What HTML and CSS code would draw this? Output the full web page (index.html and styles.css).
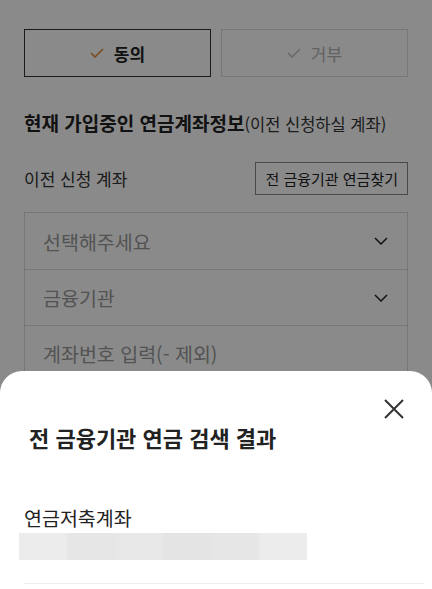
FILE: index.html
```html
<!DOCTYPE html>
<html lang="ko">
<head>
    <meta charset="UTF-8">
    <meta name="viewport" content="width=device-width, initial-scale=1.0">
    <title>연금계좌 이전</title>
    <link rel="stylesheet" href="styles.css">
</head>
<body>

    <div class="page">
        <div class="agree-row">
            <button class="agree-btn on">
                <svg width="14" height="10" viewBox="0 0 14 10"><path d="M1 5 L5 9 L13 1" fill="none" stroke="#e58a3a" stroke-width="1.6"/></svg>
                동의
            </button>
            <button class="agree-btn">
                <svg width="14" height="10" viewBox="0 0 14 10"><path d="M1 5 L5 9 L13 1" fill="none" stroke="#bbb" stroke-width="1.4"/></svg>
                거부
            </button>
        </div>

        <h2 class="section-title"><b>현재 가입중인 연금계좌정보</b>(이전 신청하실 계좌)</h2>

        <div class="label-row">
            <span class="label">이전 신청 계좌</span>
            <button class="find-btn">전 금융기관 연금찾기</button>
        </div>

        <div class="field-group">
            <div class="field">
                <span>선택해주세요</span>
                <svg width="14" height="8" viewBox="0 0 14 8"><path d="M1 1 L7 7 L13 1" fill="none" stroke="#222" stroke-width="1.5"/></svg>
            </div>
            <div class="field">
                <span>금융기관</span>
                <svg width="14" height="8" viewBox="0 0 14 8"><path d="M1 1 L7 7 L13 1" fill="none" stroke="#222" stroke-width="1.5"/></svg>
            </div>
            <div class="field">
                <span>계좌번호 입력(- 제외)</span>
            </div>
        </div>
    </div>

    <div class="dim"></div>

    <div class="sheet">
        <div class="sheet-head">
            <button class="close-btn">
                <svg width="22" height="22" viewBox="0 0 22 22"><path d="M2 2 L20 20 M20 2 L2 20" fill="none" stroke="#333" stroke-width="2"/></svg>
            </button>
        </div>
        <h3 class="sheet-title">전 금융기관 연금 검색 결과</h3>
        <div class="result">
            <p class="result-name">연금저축계좌</p>
            <div class="skeleton">
                <span></span><span></span><span></span><span></span><span></span><span></span>
            </div>
        </div>
    </div>

</body>
</html>
```

FILE: styles.css
```css
*{
    margin: 0;
    padding: 0;
    box-sizing: border-box;
    font-family: "Noto Sans CJK KR", "Noto Sans", sans-serif;
}

body{
    background: #fff;
    color: #222;
    overflow: hidden;
    height: 589px;
}

.page{
    padding: 29px 24px 0;
}

.agree-row{
    display: flex;
    gap: 10px;
}

.agree-btn{
    flex: 1;
    height: 48px;
    display: flex;
    align-items: center;
    justify-content: center;
    gap: 10px;
    background: #fff;
    border: 1px solid #ddd;
    font-size: 17px;
    color: #b5b5b5;
}

.agree-btn.on{
    border-color: #333;
    color: #222;
    font-weight: 700;
}

.section-title{
    margin-top: 33px;
    height: 26px;
    line-height: 26px;
    font-size: 16.5px;
    font-weight: 400;
    color: #333;
}

.section-title b{
    font-size: 19px;
    font-weight: 700;
    color: #222;
}

.label-row{
    display: flex;
    justify-content: space-between;
    align-items: center;
    margin-top: 26px;
}

.label{
    font-size: 17px;
    color: #333;
}

.find-btn{
    height: 33px;
    padding: 0 9px;
    background: #fff;
    border: 1px solid #888;
    font-size: 15px;
    color: #222;
}

.field-group{
    margin-top: 17px;
    border: 1px solid #ddd;
}

.field{
    height: 56px;
    display: flex;
    align-items: center;
    justify-content: space-between;
    padding: 0 19px 0 18px;
    font-size: 19.5px;
    color: #999;
}

.field + .field{
    border-top: 1px solid #ddd;
}

.dim{
    position: fixed;
    inset: 0;
    background: rgba(0, 0, 0, 0.46);
}

.sheet{
    position: fixed;
    left: 0;
    right: 0;
    top: 371px;
    bottom: 0;
    background: #fff;
    border-radius: 22px 22px 0 0;
    padding: 0 8px 0 24px;
}

.sheet-head{
    display: flex;
    justify-content: flex-end;
    padding-top: 27px;
    padding-right: 19px;
}

.close-btn{
    background: none;
    border: none;
    width: 22px;
    height: 22px;
}

.sheet-title{
    margin: 1px 0 0 5px;
    font-size: 22px;
    font-weight: 700;
    color: #222;
}

.result{
    margin-top: 50px;
    padding-bottom: 23px;
    border-bottom: 1px solid #eee;
}

.result-name{
    font-size: 19.5px;
    color: #222;
}

.skeleton{
    display: flex;
    width: 288px;
    height: 27px;
    margin: 1px 0 0 -5px;
}

.skeleton span{
    flex: 1;
    background: #ececec;
}

.skeleton span:nth-child(2){ background: #e6e6e6; }
.skeleton span:nth-child(3){ background: #e7e7e7; }
.skeleton span:nth-child(4){ background: #e3e4e3; }
.skeleton span:nth-child(5){ background: #e6e6e6; }
```
